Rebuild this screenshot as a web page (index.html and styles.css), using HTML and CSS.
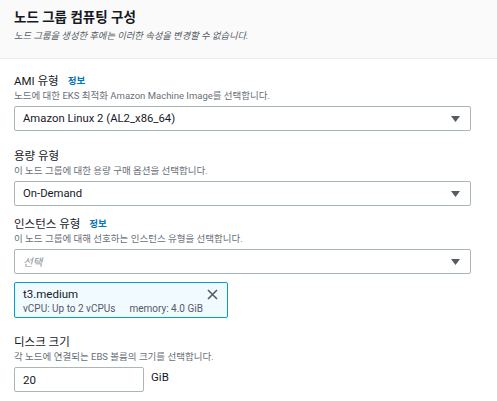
FILE: index.html
```html
<!DOCTYPE html>
<html lang="ko">
<head>
<meta charset="utf-8">
<title>노드 그룹 컴퓨팅 구성</title>
<link rel="stylesheet" href="styles.css">
</head>
<body>
<div class="panel">
  <div class="header">
    <h2 class="title">노드 그룹 컴퓨팅 구성</h2>
    <p class="subtitle">노드 그룹을 생성한 후에는 이러한 속성을 변경할 수 없습니다.</p>
  </div>
  <div class="content">
    <div class="field field-wide">
      <div class="label"><span>AMI 유형</span><a class="info" href="#">정보</a></div>
      <div class="desc">노드에 대한 EKS 최적화 Amazon Machine Image를 선택합니다.</div>
      <div class="select">
        <span class="value">Amazon Linux 2 (AL2_x86_64)</span>
        <svg class="caret" width="9" height="6" viewBox="0 0 9 6"><path d="M0 0H9L4.5 6Z"/></svg>
      </div>
    </div>
    <div class="field">
      <div class="label"><span>용량 유형</span></div>
      <div class="desc">이 노드 그룹에 대한 용량 구매 옵션을 선택합니다.</div>
      <div class="select">
        <span class="value">On-Demand</span>
        <svg class="caret" width="9" height="6" viewBox="0 0 9 6"><path d="M0 0H9L4.5 6Z"/></svg>
      </div>
    </div>
    <div class="field">
      <div class="label"><span>인스턴스 유형</span><a class="info" href="#">정보</a></div>
      <div class="desc">이 노드 그룹에 대해 선호하는 인스턴스 유형을 선택합니다.</div>
      <div class="select">
        <span class="placeholder">선택</span>
        <svg class="caret" width="9" height="6" viewBox="0 0 9 6"><path d="M0 0H9L4.5 6Z"/></svg>
      </div>
      <div class="token">
        <div class="token-text">
          <div class="token-name">t3.medium</div>
          <div class="token-meta"><span>vCPU: Up to 2 vCPUs</span><span>memory: 4.0 GiB</span></div>
        </div>
        <svg class="dismiss" width="11" height="11" viewBox="0 0 11 11"><path d="M1 1L10 10M10 1L1 10"/></svg>
      </div>
    </div>
    <div class="field field-disk">
      <div class="label"><span>디스크 크기</span></div>
      <div class="desc">각 노드에 연결되는 EBS 볼륨의 크기를 선택합니다.</div>
      <div class="input-row">
        <div class="input">20</div>
        <span class="unit">GiB</span>
      </div>
    </div>
  </div>
</div>
</body>
</html>
```

FILE: styles.css
```css
html, body {
  margin: 0;
  padding: 0;
  background: #ffffff;
}
body {
  font-family: Roboto, "Noto Sans CJK KR", sans-serif;
  color: #16191f;
}
.panel {
  width: 497px;
}
.header {
  background: #fafafa;
  border-bottom: 1px solid #eaeded;
  height: 59px;
  box-sizing: border-box;
  padding: 8px 14px 0;
}
.title {
  margin: 0;
  font-size: 13.5px;
  line-height: 19px;
  font-weight: 700;
}
.subtitle {
  margin: 2px 0 0;
  font-size: 9.3px;
  line-height: 14px;
  font-style: italic;
  color: #545b64;
}
.content {
  padding: 14px 26px 0 14px;
}
.field {
  margin-bottom: 10px;
}
.field-wide {
  margin-bottom: 17px;
}
.label {
  font-size: 11.5px;
  line-height: 16px;
  display: flex;
  align-items: center;
  gap: 9px;
}
.info {
  color: #0073bb;
  font-weight: 700;
  font-size: 9.5px;
  text-decoration: none;
}
.desc {
  font-size: 9.5px;
  line-height: 14px;
  color: #687078;
}
.select {
  margin-top: 3px;
  height: 25px;
  box-sizing: border-box;
  border: 1px solid #aab7b8;
  border-radius: 2px;
  display: flex;
  align-items: center;
  justify-content: space-between;
  padding: 0 10px 0 8px;
  font-size: 11.3px;
}
.caret {
  fill: #545b64;
}
.placeholder {
  color: #879596;
  font-style: italic;
  font-size: 10.5px;
}
.token {
  margin-top: 8px;
  width: 214px;
  height: 36px;
  box-sizing: border-box;
  border: 1px solid #00a1c9;
  border-radius: 2px;
  background: #f1faff;
  display: flex;
  align-items: flex-start;
  justify-content: space-between;
  padding: 4px 9px 0 8px;
}
.token-name {
  font-size: 11.5px;
  line-height: 15px;
}
.token-meta {
  font-size: 10px;
  line-height: 14px;
  color: #545b64;
  display: flex;
  gap: 14px;
}
.dismiss {
  margin-top: 2px;
  stroke: #545b64;
  stroke-width: 1.6;
  fill: none;
}
.field-disk {
  margin-top: 16px;
}
.input-row {
  margin-top: 3px;
  display: flex;
  align-items: flex-start;
  gap: 7px;
}
.input {
  width: 130px;
  height: 25px;
  box-sizing: border-box;
  border: 1px solid #aab7b8;
  border-radius: 2px;
  display: flex;
  align-items: center;
  padding: 0 8px;
  font-size: 11.5px;
}
.unit {
  font-size: 11.5px;
  line-height: 20px;
}
```
